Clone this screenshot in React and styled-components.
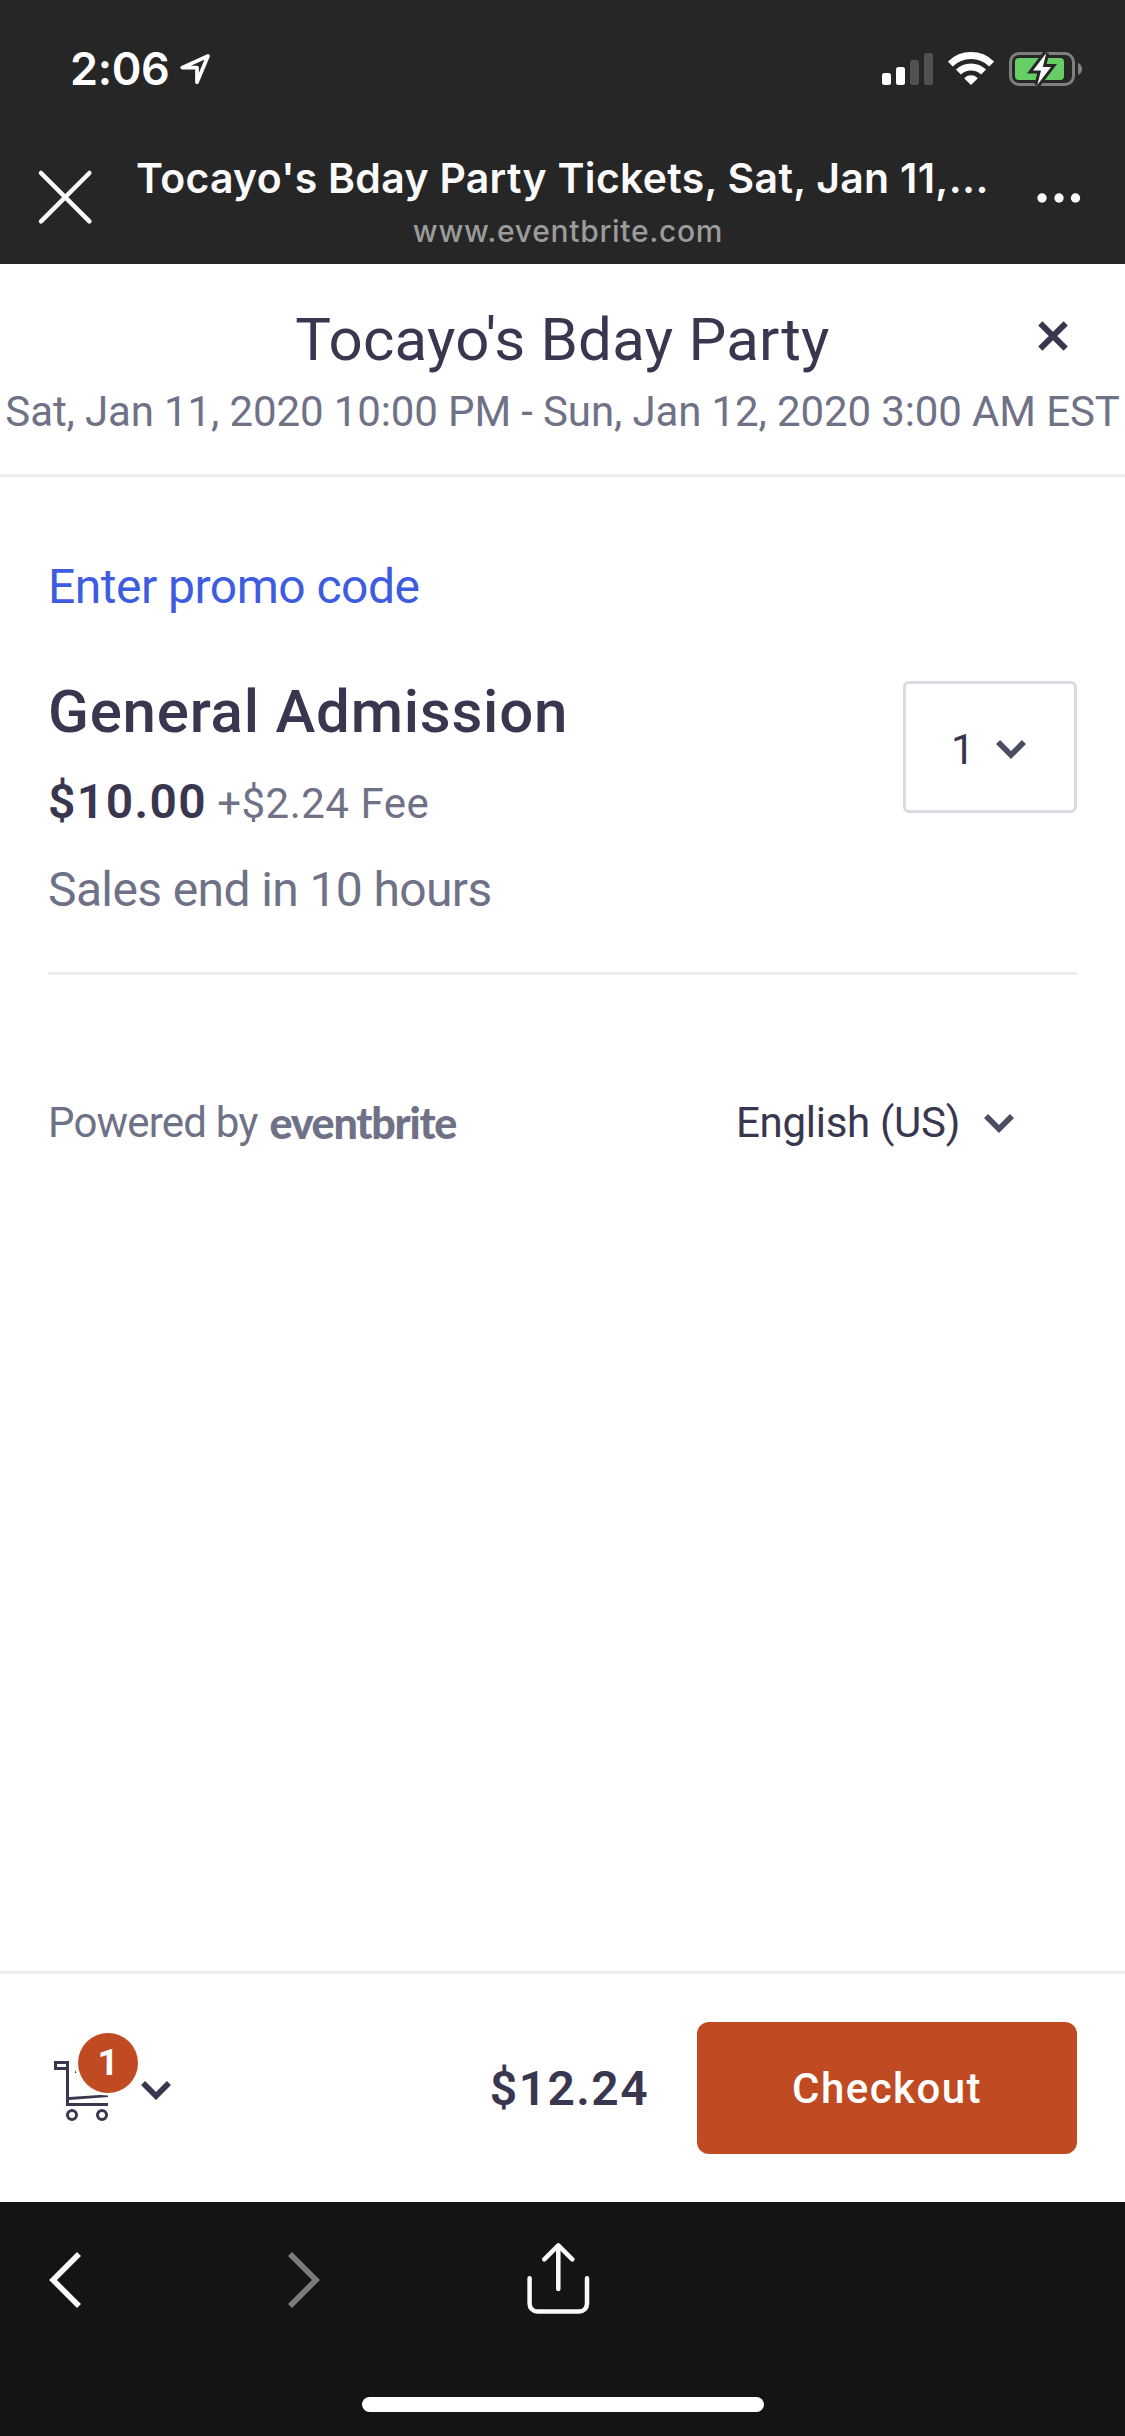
import React from 'react';
import styled, { createGlobalStyle } from 'styled-components';

const GlobalStyle = createGlobalStyle`
  * {
    box-sizing: border-box;
  }

  body {
    margin: 0;
    background: #ffffff;
  }

  button {
    padding: 0;
    border: none;
    background: none;
    font: inherit;
    color: inherit;
  }

  svg {
    display: block;
    flex-shrink: 0;
  }
`;

const Screen = styled.div`
  display: flex;
  flex-direction: column;
  width: 1125px;
  height: 2436px;
  overflow: hidden;
  background: #ffffff;
  color: #39364f;
  font-family: Roboto, 'Liberation Sans', sans-serif;
  white-space: nowrap;
`;

const BrowserHeader = styled.header`
  height: 264px;
  background: #262626;
  color: #fafafa;
  font-family: Inter, 'Liberation Sans', sans-serif;
`;

const StatusBar = styled.div`
  display: flex;
  align-items: center;
  height: 137px;
  padding: 0 43px 0 70px;
  color: #ffffff;
`;

const Time = styled.span`
  width: 110px;
  font-size: 45px;
  font-weight: 600;
  letter-spacing: -0.36px;
`;

const StatusIcons = styled.div`
  display: flex;
  align-items: center;
  gap: 15px;
  margin-left: auto;
`;

const NavBar = styled.div`
  display: flex;
  align-items: center;
  height: 121px;
  padding: 0 44px 0 37px;
`;

const PageInfo = styled.div`
  display: flex;
  flex-direction: column;
  align-self: flex-start;
  gap: 8px;
  width: 864px;
  margin: 16px auto 0 42px;
`;

const PageTitle = styled.div`
  font-size: 41px;
  font-weight: 600;
  line-height: 50px;
  letter-spacing: 0.28px;
`;

const PageUrl = styled.div`
  color: #9b9b9b;
  font-size: 30px;
  font-weight: 500;
  line-height: 40px;
  letter-spacing: 0.69px;
  text-align: center;
`;

const EventHeader = styled.div`
  height: 213px;
  padding-top: 40px;
  border-bottom: 3px solid #eeedf2;
`;

const EventTitleRow = styled.div`
  display: grid;
  grid-template-columns: 1fr auto 1fr;
  align-items: center;
  padding: 0 57px;
`;

const EventTitle = styled.h1`
  grid-column: 2;
  margin: 0;
  font-size: 60px;
  font-weight: 400;
  line-height: 72px;
  letter-spacing: 0.25px;
`;

const CloseButton = styled.button`
  justify-self: end;
  margin-bottom: 8px;
`;

const EventDate = styled.div`
  margin-top: 6px;
  color: #6f7287;
  font-size: 42px;
  line-height: 60px;
  letter-spacing: -0.12px;
  text-align: center;
`;

const Content = styled.main`
  flex: 1;
  padding: 74px 48px 0;
`;

const PromoLink = styled.a`
  display: block;
  color: #3d5ce0;
  font-size: 48px;
  line-height: 72px;
  letter-spacing: -0.51px;
`;

const Ticket = styled.section`
  display: flex;
  justify-content: space-between;
  height: 299px;
  margin-top: 53px;
  border-bottom: 3px solid #eeedf2;
`;

const TicketName = styled.h2`
  margin: 0;
  font-size: 60px;
  font-weight: 500;
  line-height: 72px;
  letter-spacing: 0.78px;
`;

const PriceRow = styled.div`
  display: flex;
  align-items: baseline;
  gap: 10px;
  height: 72px;
  margin-top: 18px;
  line-height: 72px;
`;

const Price = styled.span`
  font-size: 48px;
  font-weight: 600;
  letter-spacing: 1.4px;
`;

const Fee = styled.span`
  color: #6f7287;
  font-size: 42px;
  letter-spacing: 0.5px;
`;

const SalesEnd = styled.div`
  margin-top: 16px;
  color: #6f7287;
  font-size: 48px;
  line-height: 72px;
  letter-spacing: -0.62px;
`;

const QuantitySelect = styled.button`
  display: flex;
  align-items: center;
  gap: 21px;
  width: 174px;
  height: 132px;
  margin-top: 5px;
  padding: 5px 0 0 45px;
  border: 3px solid #dbdae3;
  border-radius: 6px;
  font-size: 42px;
`;

const PoweredRow = styled.div`
  display: flex;
  align-items: center;
  height: 60px;
  margin-top: 118px;
  padding: 0 63px 0 0;
  font-size: 42px;
  line-height: 60px;
`;

const PoweredBy = styled.span`
  color: #6f7287;
  letter-spacing: -0.8px;
`;

const Brand = styled.span`
  margin-left: 12px;
  color: #6f7287;
  font-family: Lato, sans-serif;
  font-size: 43px;
  font-weight: 900;
  letter-spacing: -1.25px;
`;

const Language = styled.button`
  display: flex;
  align-items: center;
  gap: 24px;
  margin-left: auto;
  letter-spacing: -0.29px;
`;

const CartBar = styled.footer`
  display: flex;
  align-items: center;
  height: 231px;
  padding: 0 48px 0 54px;
  border-top: 3px solid #eeedf2;
`;

const Cart = styled.div`
  position: relative;
  margin: 6px 33px 0 0;
`;

const CartBadge = styled.span`
  position: absolute;
  top: -28px;
  left: 24px;
  width: 60px;
  height: 60px;
  border-radius: 50%;
  background: #c04a22;
  color: #ffffff;
  font-size: 37px;
  font-weight: 700;
  line-height: 60px;
  text-align: center;
`;

const CartToggle = styled.button`
  margin-top: 5px;
`;

const Total = styled(Price)`
  margin-left: auto;
`;

const CheckoutButton = styled.button`
  width: 380px;
  height: 132px;
  margin-left: 48px;
  border-radius: 12px;
  background: #c04a22;
  color: #ffffff;
  font-size: 42px;
  font-weight: 500;
  letter-spacing: 1.45px;
`;

const BottomBar = styled.div`
  height: 234px;
  background: #141414;
  color: #fafafa;
`;

const Toolbar = styled.nav`
  display: flex;
  align-items: center;
  gap: 207px;
  height: 156px;
  padding: 0 49px;
`;

const ToolbarButton = styled.button`
  color: ${(props) => (props.disabled ? '#7b7b7b' : '#fafafa')};
`;

const HomeIndicator = styled.div`
  width: 402px;
  height: 15px;
  margin: 39px auto 0;
  border-radius: 8px;
  background: #ffffff;
`;

const LocationIcon = () => (
  <svg width="30" height="32" viewBox="0 0 30 32" fill="none" stroke="currentColor" strokeWidth="3.7" strokeLinejoin="round">
    <path d="M28 3 L2.2 14.6 H17 V29.3 Z" />
  </svg>
);

const SignalIcon = () => (
  <svg width="51" height="32" viewBox="0 0 51 32" fill="currentColor">
    <rect x="0" y="20" width="9" height="12" rx="2.5" />
    <rect x="14" y="14" width="9" height="18" rx="2.5" />
    <rect x="28" y="7" width="9" height="25" rx="2.5" fill="#515151" />
    <rect x="42" y="0" width="9" height="32" rx="2.5" fill="#515151" />
  </svg>
);

const WifiIcon = () => (
  <svg width="46" height="33" viewBox="0 0 46 33" fill="none" stroke="currentColor" strokeWidth="7">
    <path d="M2.3 12.1 A29.3 29.3 0 0 1 43.7 12.1" />
    <path d="M10.4 20.1 A18 18 0 0 1 35.6 20.1" />
    <path d="M23 32 L17.2 26.3 A8.6 8.6 0 0 1 28.8 26.3 Z" fill="currentColor" strokeWidth="1.5" strokeLinejoin="round" />
  </svg>
);

const BatteryIcon = () => (
  <svg width="73" height="34" viewBox="0 0 73 34">
    <rect x="1.5" y="1.5" width="63" height="31" rx="8.5" fill="none" stroke="#7f7f7f" strokeWidth="3" />
    <path d="M69 11 C74.5 13 74.5 21 69 23 Z" fill="#7f7f7f" />
    <rect x="6" y="6" width="49" height="22" rx="4" fill="#67ce67" />
    <path
      d="M37.3 1 L24 18.5 H32 L28.3 33 L42 15 H33.8 Z"
      fill="#ffffff"
      stroke="#262626"
      strokeWidth="6"
      paintOrder="stroke"
    />
  </svg>
);

const DismissIcon = () => (
  <svg width="57" height="57" viewBox="0 0 57 57" stroke="currentColor" strokeWidth="4.5" strokeLinecap="round">
    <path d="M4 4 L52.4 52.4 M52.4 4 L4 52.4" />
  </svg>
);

const MoreIcon = () => (
  <svg width="44" height="10" viewBox="0 0 44 10" fill="currentColor">
    <circle cx="5" cy="5" r="4.7" />
    <circle cx="22" cy="5" r="4.7" />
    <circle cx="38.5" cy="5" r="4.7" />
  </svg>
);

const CloseIcon = () => (
  <svg width="30" height="30" viewBox="0 0 30 30" stroke="#39364f" strokeWidth="6">
    <path d="M2.3 2.3 L27.7 27.7 M27.7 2.3 L2.3 27.7" />
  </svg>
);

const ChevronIcon = ({ color = '#4b4d63' }) => (
  <svg width="30" height="19" viewBox="0 0 30 19" fill={color}>
    <path d="M0 4 L4.1 0 L15 11 L25.9 0 L30 4 L15 19 Z" />
  </svg>
);

const CartIcon = () => (
  <svg width="54" height="60" viewBox="0 0 54 60" fill="none" stroke="#39364f" strokeWidth="3">
    <path d="M13.5 7.5 H1.5 V1.5 H13.5 V43.5 H54" />
    <path d="M15 36 L46 34 L54 34.5 V36 L15 39 Z" fill="#39364f" stroke="none" />
    <path d="M21 9 L22.5 12 H21 Z" fill="#39364f" stroke="none" />
    <circle cx="18" cy="54" r="4.5" />
    <circle cx="48" cy="54" r="4.5" />
  </svg>
);

const ArrowIcon = ({ d }) => (
  <svg width="32" height="56" viewBox="0 0 32 56" fill="none" stroke="currentColor" strokeWidth="5.6">
    <path d={d} />
  </svg>
);

const ShareIcon = () => (
  <svg width="63" height="74" viewBox="0 0 63 74" fill="none" stroke="currentColor" strokeWidth="4.5" strokeLinecap="round" strokeLinejoin="round">
    <path d="M31.3 3 V46" />
    <path d="M17.3 16.3 L31.3 2.4 L45.3 16.3" />
    <path d="M2.6 35.3 V60.8 a7.7 7.7 0 0 0 7.7 7.7 H52.3 a7.7 7.7 0 0 0 7.7 -7.7 V35.3" />
  </svg>
);

const App = () => {
  return (
    <>
      <GlobalStyle />
      <Screen>
        <BrowserHeader>
          <StatusBar>
            <Time>2:06</Time>
            <LocationIcon />
            <StatusIcons>
              <SignalIcon />
              <WifiIcon />
              <BatteryIcon />
            </StatusIcons>
          </StatusBar>
          <NavBar>
            <DismissIcon />
            <PageInfo>
              <PageTitle>Tocayo's Bday Party Tickets, Sat, Jan 11,...</PageTitle>
              <PageUrl>www.eventbrite.com</PageUrl>
            </PageInfo>
            <MoreIcon />
          </NavBar>
        </BrowserHeader>

        <EventHeader>
          <EventTitleRow>
            <EventTitle>Tocayo's Bday Party</EventTitle>
            <CloseButton aria-label="Close">
              <CloseIcon />
            </CloseButton>
          </EventTitleRow>
          <EventDate>Sat, Jan 11, 2020 10:00 PM - Sun, Jan 12, 2020 3:00 AM EST</EventDate>
        </EventHeader>

        <Content>
          <PromoLink>Enter promo code</PromoLink>
          <Ticket>
            <div>
              <TicketName>General Admission</TicketName>
              <PriceRow>
                <Price>$10.00</Price>
                <Fee>+$2.24 Fee</Fee>
              </PriceRow>
              <SalesEnd>Sales end in 10 hours</SalesEnd>
            </div>
            <QuantitySelect>
              1
              <ChevronIcon />
            </QuantitySelect>
          </Ticket>
          <PoweredRow>
            <PoweredBy>Powered by</PoweredBy>
            <Brand>eventbrite</Brand>
            <Language>
              English (US)
              <ChevronIcon />
            </Language>
          </PoweredRow>
        </Content>

        <CartBar>
          <Cart>
            <CartIcon />
            <CartBadge>1</CartBadge>
          </Cart>
          <CartToggle aria-label="Show cart">
            <ChevronIcon color="#39364f" />
          </CartToggle>
          <Total>$12.24</Total>
          <CheckoutButton>Checkout</CheckoutButton>
        </CartBar>

        <BottomBar>
          <Toolbar>
            <ToolbarButton aria-label="Back">
              <ArrowIcon d="M30 2 L4 28 L30 54" />
            </ToolbarButton>
            <ToolbarButton aria-label="Forward" disabled>
              <ArrowIcon d="M2 2 L28 28 L2 54" />
            </ToolbarButton>
            <ToolbarButton aria-label="Share">
              <ShareIcon />
            </ToolbarButton>
          </Toolbar>
          <HomeIndicator />
        </BottomBar>
      </Screen>
    </>
  );
};

export default App;
